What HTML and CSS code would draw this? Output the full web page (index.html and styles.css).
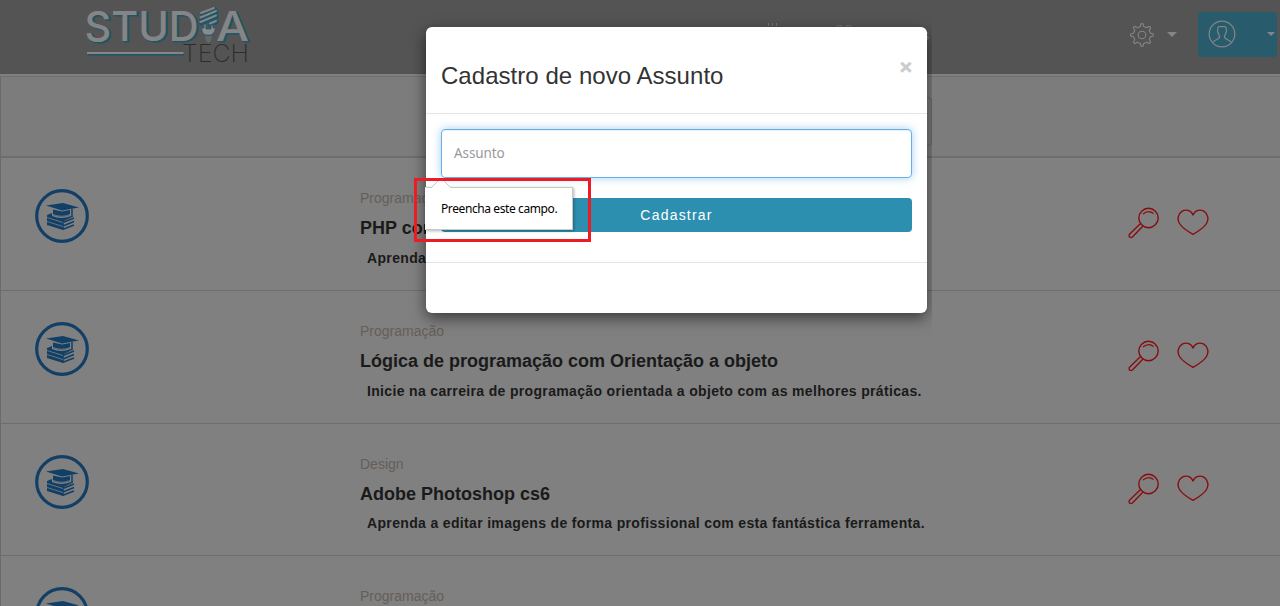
FILE: index.html
```html
<!DOCTYPE html>
<html lang="pt-BR">
<head>
<meta charset="utf-8">
<title>Studia Tech</title>
<link rel="stylesheet" href="styles.css">
</head>
<body>
<svg class="defs" width="0" height="0">
  <symbol id="books" viewBox="0 0 54 54">
    <circle cx="27" cy="27" r="25.300" fill="none" stroke="#123f66" stroke-width="3.200"/>
    <path fill="#123f66" d="M11 16.500 28 14 44 18.500 27 21.500ZM18 20.500 27 22.500 35 21V26Q27 29.500 18 26ZM12 26 17 24V27Q26 31 36 27L38 27.500 28 32.500V41L12 36Z"/>
    <path fill="none" stroke="#123f66" stroke-width="1.500" d="M37 20V28M28 33.500 39 29M28 37 39 32.500M28 40.300 39 36M28 32V41"/>
    <path fill="none" stroke="#808080" stroke-width=".8" d="m12 28.500 16 5M12 32.500 28 37.500M18 25.500Q27 29 35 25.500"/>
  </symbol>
  <symbol id="search" viewBox="0 0 32 32">
    <g fill="none" stroke="#860d11" stroke-width="1.400" stroke-linejoin="round">
      <circle cx="20.500" cy="11" r="9.700"/><path d="M15 7Q20.500 2.500 25.500 6.500M11.500 17.500 1.300 27.500Q.8 29 1.500 30 3 31 4.400 30L14 20M11.500 17.500 13 16.500M14 20 15 19"/>
    </g>
  </symbol>
  <symbol id="heart" viewBox="0 0 32 28">
    <path fill="none" stroke="#860d11" stroke-width="1.400" stroke-linejoin="round" d="M16 6C14 .8 8.500.2 5.200 2.200.7 5 .1 10.500 2.500 14.500 5.300 19 10 22 16 25.300 22 22 26.700 19 29.500 14.500 31.900 10.500 31.300 5 26.800 2.200 23.500.2 18 .8 16 6Z"/>
  </symbol>
</svg>
<div class="page">
  <header class="topbar">
    <svg class="logo" width="180" height="70" viewBox="80 0 180 70">
      <g class="logo-shadow"><text x="86" y="42" textLength="114" lengthAdjust="spacingAndGlyphs">STUD</text><text x="217.500" y="42" textLength="33" lengthAdjust="spacingAndGlyphs">A</text></g>
      <g class="logo-main"><text x="84.500" y="40.500" textLength="114" lengthAdjust="spacingAndGlyphs">STUD</text><text x="216" y="40.500" textLength="33" lengthAdjust="spacingAndGlyphs">A</text></g>
      <path d="M88 54.500H184" stroke="#1c5669" stroke-width="2"/><path d="M87 53H183.500" stroke="#858585" stroke-width="1.800"/>
      <path d="m202 14 13-5M201 19 217 12.500M201 23.500 217 17M210 25 217 22" stroke="#1c5669" stroke-width="3.800" stroke-linecap="round"/>
      <path d="m201 13 13-5M200.500 17.500 216 11M200.500 22 216 15.500M210 23.500 216 21" stroke="#858585" stroke-width="2" stroke-linecap="round"/>
      <path d="M204 24V28H201.500Q202 34 206 35H211Q215 33 215.500 28H213V25H211V29H206V24Z" fill="#858d90" stroke="#1c5669" stroke-width=".7"/>
      <path d="M205 36H212L211 41 208.500 43 206 41Z" fill="#5f696c"/>
      <text class="logo-tech" x="182" y="62" textLength="67" lengthAdjust="spacingAndGlyphs">TECH</text>
    </svg>
    <div class="nav-hint">
      <svg width="165" height="20" viewBox="766 22 165 20" fill="none" stroke="#777"><path d="M768.500 23V26M772.500 23V26M776.500 23V26"/><circle cx="839.500" cy="30" r="4.500"/><circle cx="848.500" cy="30" r="4.500"/></svg><span>s</span>
    </div>
    <div class="tools">
      <svg width="24" height="24" viewBox="-12 -12 24 24" fill="none" stroke="#858585" stroke-width="1.100" stroke-linejoin="round"><circle r="3.800"/><path d="M-1.700-8.500-1-11.300H1L1.700-8.500 4.700-7.200 7.300-8.700 8.700-7.300 7.200-4.700 8.500-1.700 11.300-1V1L8.500 1.700 7.200 4.700 8.700 7.300 7.300 8.700 4.700 7.200 1.700 8.500 1 11.300H-1L-1.700 8.500-4.700 7.200-7.300 8.700-8.700 7.300-7.200 4.700-8.500 1.700-11.300 1V-1L-8.500-1.700-7.200-4.700-8.700-7.300-7.300-8.700-4.700-7.200Z"/></svg>
      <i class="caret gear-caret"></i>
      <div class="user">
        <svg width="28" height="28" viewBox="0 0 28 28" fill="none" stroke="#858585" stroke-width="1.200"><circle cx="14" cy="14" r="12.800"/><path d="M4.500 22.500C6 20 11 19 11.500 17.500 11.800 16 10.800 15.500 10.500 13.500 8.500 11.500 10 10.500 9.700 9 10 5.500 12.500 6.700 14 6.700S18 5.500 18.300 9C18 10.500 19.500 11.500 17.500 13.500 17.200 15.500 16.200 16 16.500 17.500 17 19 22 20 23.500 22.500"/></svg>
        <i class="caret"></i>
      </div>
    </div>
  </header>
  <main class="content">
    <div class="filter"><div class="filter-input"></div></div>
    <article class="course">
      <svg class="badge" width="54" height="54"><use href="#books"/></svg>
      <div class="info"><span class="category">Programação</span><h2>PHP com MySQL</h2><p>Aprenda PHP</p></div>
      <div class="actions"><svg width="32" height="32"><use href="#search"/></svg><svg width="32" height="28"><use href="#heart"/></svg></div>
    </article>
    <article class="course">
      <svg class="badge" width="54" height="54"><use href="#books"/></svg>
      <div class="info"><span class="category">Programação</span><h2>Lógica de programação com Orientação a objeto</h2><p>Inicie na carreira de programação orientada a objeto com as melhores práticas.</p></div>
      <div class="actions"><svg width="32" height="32"><use href="#search"/></svg><svg width="32" height="28"><use href="#heart"/></svg></div>
    </article>
    <article class="course short">
      <svg class="badge" width="54" height="54"><use href="#books"/></svg>
      <div class="info"><span class="category">Design</span><h2>Adobe Photoshop cs6</h2><p>Aprenda a editar imagens de forma profissional com esta fantástica ferramenta.</p></div>
      <div class="actions"><svg width="32" height="32"><use href="#search"/></svg><svg width="32" height="28"><use href="#heart"/></svg></div>
    </article>
    <article class="course">
      <svg class="badge" width="54" height="54"><use href="#books"/></svg>
      <div class="info"><span class="category">Programação</span></div>
    </article>
  </main>
</div>
<div class="modal-clip">
  <section class="modal">
    <div class="modal-header"><h1>Cadastro de novo Assunto</h1><span class="close">×</span></div>
    <form class="modal-body">
      <div class="field">Assunto</div>
      <div class="submit">Cadastrar</div>
    </form>
    <div class="modal-footer"></div>
  </section>
</div>
<div class="tooltip">
  <svg class="arrow" width="20" height="10" viewBox="0 0 20 10"><path d="M0 9 9 0 18 9V10H0Z" fill="#fff"/><path d="M0 9 9 0 18 9" fill="none" stroke="#c8c8c8"/></svg>
  <span>Preencha este campo.</span>
</div>
<div class="highlight"></div>
</body>
</html>
```
FILE: styles.css
```css
* { box-sizing: border-box; }
body { margin: 0; background: #808080; font-family: "Liberation Sans", Arial, sans-serif; color: #1a1a1a; overflow: hidden; }
.defs { position: absolute; }
.page { height: 606px; overflow: hidden; }
.topbar { height: 74px; background: #545454; display: flex; padding-left: 80px; }
.logo { flex: none; }
.logo text { font-family: Inter, sans-serif; font-size: 41px; font-weight: 500; }
.logo-main { fill: #858585; }
.logo-shadow { fill: #1c5669; stroke: #1c5669; stroke-width: 1; }
.logo .logo-tech { font-size: 24px; font-weight: 200; fill: #2c2c2c; }
.nav-hint { margin-left: 506px; padding-top: 22px; width: 170px; display: flex; font-size: 14px; color: #858585; }
.nav-hint svg { flex: none; margin-right: -9px; }
.nav-hint span { line-height: 26px; }
.tools { margin-left: auto; padding-right: 3px; display: flex; align-items: flex-start; }
.tools > svg { margin-top: 23px; }
.caret { border: 5px solid transparent; border-top-color: #858585; border-bottom: 0; }
.gear-caret { margin: 32px 21px 0 13px; }
.user { margin-top: 12px; width: 79px; height: 45px; background: #285c6d; border-radius: 4px; display: flex; align-items: center; justify-content: space-between; padding: 0 2px 2px 10px; }
.user .caret { border-left-width: 4px; border-right-width: 4px; border-top-width: 4px; }
.content { margin-top: 2px; border-left: 1px solid #6b6b6b; border-top: 1px solid #707070; }
.filter { height: 81px; background: #7c7c7c; border-bottom: 2px solid #6e6e6e; padding: 20px 0 0 430px; }
.filter-input { width: 501px; height: 49px; border: 1px solid #696969; border-radius: 4px; }
.course { height: 133px; border-bottom: 1px solid #6d6d6d; display: flex; align-items: flex-start; padding: 31px 71px 0 34px; }
.short { height: 132px; }
.badge { flex: none; }
.info { margin: -1px 0 0 271px; width: 650px; }
.category { display: block; font-size: 14px; line-height: 20px; color: #655e59; }
.info h2 { margin: 10px 0 0; font-size: 18px; line-height: 20px; }
.info p { margin: 10px 0 0 7px; font-size: 14px; line-height: 20px; font-weight: bold; white-space: nowrap; letter-spacing: .34px; }
.short p { margin-top: 9px; }
.actions { margin: 18px 0 0 auto; display: flex; gap: 17px; align-items: center; }
.modal-clip { position: absolute; left: 426px; top: 27px; width: 501px; clip-path: inset(-30px -5px -40px -30px); }
.modal { height: 286px; background: #fff; border-radius: 6px; box-shadow: 0 5px 15px rgba(0,0,0,.55); }
.modal-header { height: 87px; border-bottom: 1px solid #e5e5e5; padding: 32px 15px 0; display: flex; justify-content: space-between; }
.modal-header h1 { margin: 0; font-size: 24px; line-height: 33px; font-weight: 400; color: #333; letter-spacing: .04px; }
.close { font-size: 21px; font-weight: bold; line-height: 15px; color: #ccc; -webkit-text-stroke: .6px #ccc; }
.modal-body { height: 149px; padding: 15px 15px 0; border-bottom: 1px solid #e5e5e5; }
.field { height: 49px; border: 1px solid #66afe9; border-radius: 4px; box-shadow: inset 0 1px 1px rgba(0,0,0,.075), 0 0 8px rgba(102,175,233,.6); padding-left: 12px; font: 13.500px/47px "Noto Sans", sans-serif; letter-spacing: -.1px; color: #999; }
.submit { margin-top: 20px; height: 34px; border-radius: 4px; background: #2d8fb0; color: #fff; font-size: 14px; line-height: 34px; text-align: center; letter-spacing: 1.200px; }
.tooltip { position: absolute; left: 425px; top: 187px; width: 148px; height: 43px; background: #fff; border: 1px solid #c8c8c8; border-left-color: #fff; box-shadow: 1px 1px 3px rgba(0,0,0,.3); padding-left: 15px; font: 12px/41px "Noto Sans", sans-serif; letter-spacing: -.4px; color: #000; white-space: nowrap; }
.arrow { position: absolute; left: 6px; top: -10px; }
.highlight { position: absolute; left: 414px; top: 178px; width: 177px; height: 64px; border: 3px solid #ed1c24; }
```
